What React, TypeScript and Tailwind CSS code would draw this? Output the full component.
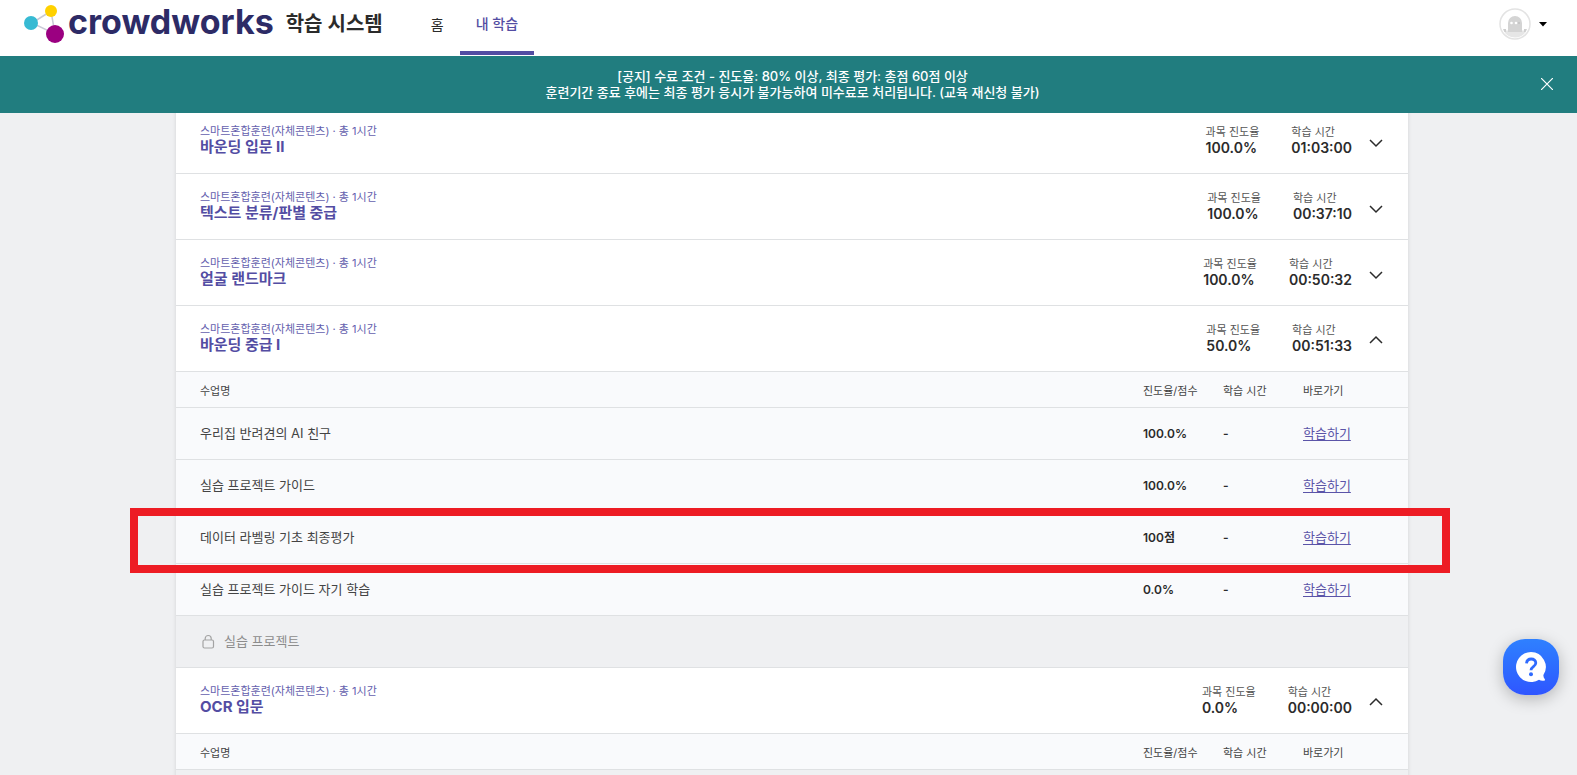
import { useState } from "react";

interface Lesson {
    name: string;
    score?: string;
    locked?: boolean;
    marked?: boolean;
}

interface Course {
    id: number;
    title: string;
    progress: string;
    time: string;
    lessons: Lesson[];
}

const courses: Course[] = [
    { id: 1, title: "바운딩 입문 II", progress: "100.0%", time: "01:03:00", lessons: [] },
    { id: 2, title: "텍스트 분류/판별 중급", progress: "100.0%", time: "00:37:10", lessons: [] },
    { id: 3, title: "얼굴 랜드마크", progress: "100.0%", time: "00:50:32", lessons: [] },
    {
        id: 4,
        title: "바운딩 중급 I",
        progress: "50.0%",
        time: "00:51:33",
        lessons: [
            { name: "우리집 반려견의 AI 친구", score: "100.0%" },
            { name: "실습 프로젝트 가이드", score: "100.0%" },
            { name: "데이터 라벨링 기초 최종평가", score: "100점", marked: true },
            { name: "실습 프로젝트 가이드 자기 학습", score: "0.0%" },
            { name: "실습 프로젝트", locked: true },
        ],
    },
    {
        id: 5,
        title: "OCR 입문",
        progress: "0.0%",
        time: "00:00:00",
        lessons: [{ name: "", locked: true }],
    },
];

const LogoMark = () => (
    <svg width="40" height="40" viewBox="0 0 40 40" aria-hidden="true">
        <path d="M8 19 27 7l4 23z" fill="none" stroke="#c9c9d6" strokeWidth="1.5" />
        <circle cx="7" cy="19" r="7" fill="#37bad3" />
        <circle cx="27" cy="7" r="6" fill="#ffd100" />
        <circle cx="31" cy="30" r="9" fill="#9b0081" />
    </svg>
);

const Ghost = () => (
    <svg width="32" height="32" viewBox="0 0 32 32" aria-hidden="true">
        <circle cx="16" cy="16" r="15" fill="#fff" stroke="#e3e3e3" strokeWidth="1.5" />
        <path d="M4.500 22.500h23a13 13 0 0 1-23 0z" fill="#e6e6e6" />
        <path d="M4 21h3v3H5.500zM25 21h3l-1.500 3H25z" fill="#cfcfcf" />
        <path d="M9 24v-9a7 7 0 0 1 14 0v9z" fill="#d4d4d4" />
        <circle cx="12.500" cy="15" r="1.300" fill="#fff" />
        <circle cx="17" cy="15" r="1.300" fill="#fff" />
        <circle cx="20" cy="15" r="1" fill="#c2c2c2" />
    </svg>
);

const Chevron = ({ open }: { open: boolean }) => (
    <svg width="24" height="24" viewBox="0 0 24 24" fill="none" stroke="#2b2b2b" strokeWidth="1.5" aria-hidden="true">
        <path d={open ? "M6 16l6-6 6 6" : "M6 11l6 6 6-6"} />
    </svg>
);

const Lock = () => (
    <svg width="16" height="16" viewBox="0 0 16 16" fill="none" stroke="#a3a3a3" strokeWidth="1.200" aria-hidden="true">
        <rect x="3" y="6" width="10.500" height="8" rx="1.500" />
        <path d="M5.200 6V4.500a3 3 0 0 1 6 0V6" />
    </svg>
);

const LessonTable = ({ lessons }: { lessons: Lesson[] }) => (
    <table className="w-full table-fixed border-separate border-spacing-0 bg-[#f9fafc] text-left text-[13px] text-[#444]">
        <colgroup>
            <col />
            <col className="w-20" />
            <col className="w-20" />
            <col className="w-[105px]" />
        </colgroup>
        <thead>
            <tr className="text-[11px] [&>th]:h-9 [&>th]:border-b [&>th]:border-[#dfe1e3] [&>th]:p-0 [&>th]:pt-1 [&>th]:font-normal">
                <th>
                    <span className="pl-6">수업명</span>
                </th>
                <th>진도율/점수</th>
                <th>학습 시간</th>
                <th>바로가기</th>
            </tr>
        </thead>
        <tbody>
            {lessons.map((lesson, i) =>
                lesson.locked ? (
                    <tr key={i}>
                        <td colSpan={4} className="h-[52px] border-b border-[#dfe1e3] bg-[#eff0f2] pl-6 text-[#8c8c8c]">
                            {lesson.name && (
                                <span className="flex items-center gap-2">
                                    <Lock />
                                    {lesson.name}
                                </span>
                            )}
                        </td>
                    </tr>
                ) : (
                    <tr key={i} className="relative [&>td]:h-[52px] [&>td]:border-b [&>td]:border-[#dfe1e3] [&>td]:p-0">
                        <td>
                            <span className="pl-6">{lesson.name}</span>
                            {lesson.marked && (
                                <span className="pointer-events-none absolute -top-1 -right-[42px] -bottom-[9px] -left-[46px] z-10 border-8 border-[#ed1c24]" />
                            )}
                        </td>
                        <td className="text-[12px] font-semibold text-[#2b2b2b]">{lesson.score}</td>
                        <td className="text-[12px] font-semibold text-[#2b2b2b]">-</td>
                        <td>
                            <a href="#" className="text-[#5b54a8] underline underline-offset-2">
                                학습하기
                            </a>
                        </td>
                    </tr>
                )
            )}
        </tbody>
    </table>
);

const App = () => {
    const [openIds, setOpenIds] = useState<number[]>([4, 5]);
    const [showNotice, setShowNotice] = useState(true);

    const toggle = (id: number) => {
        setOpenIds(openIds.includes(id) ? openIds.filter((o) => o !== id) : [...openIds, id]);
    };

    return (
        <div className="flex h-screen flex-col overflow-hidden bg-[#eff0f2] font-['Inter','Noto_Sans_CJK_KR',sans-serif] text-[#2b2b2b]">
            <header className="z-20 flex h-14 shrink-0 items-center justify-between bg-white pr-[30px] pl-6">
                <div className="flex h-full items-center">
                    <a href="#" className="flex items-center pb-2">
                        <LogoMark />
                        <span className="ml-1 pb-1 font-[Inter,sans-serif] text-[34px] leading-10 font-bold text-[#2d2b66]">crowdworks</span>
                        <span className="ml-3 text-[20px] leading-6 font-semibold">학습 시스템</span>
                    </a>
                    <nav className="ml-8 flex h-full text-[14px] font-medium">
                        <a href="#" className="flex items-center px-4 pb-2 font-normal">
                            홈
                        </a>
                        <a href="#" className="mb-px flex items-center border-b-4 border-[#534da3] px-4 pb-1 text-[#534da3]">
                            내 학습
                        </a>
                    </nav>
                </div>
                <button className="mb-2 flex items-center gap-2" aria-label="내 계정">
                    <Ghost />
                    <svg width="8" height="5" viewBox="0 0 8 5" aria-hidden="true">
                        <path d="M0 0h8L4 4.500z" fill="#000" />
                    </svg>
                </button>
            </header>

            {showNotice && (
                <div className="z-20 flex h-[57px] shrink-0 items-center bg-[#217d7f] pr-6 pb-0.5 pl-11 text-white">
                    <p className="flex-1 text-center text-[13px] leading-4 font-medium">
                        [공지] 수료 조건 - 진도율: 80% 이상, 최종 평가: 총점 60점 이상
                        <br />
                        훈련기간 종료 후에는 최종 평가 응시가 불가능하여 미수료로 처리됩니다. (교육 재신청 불가)
                    </p>
                    <button onClick={() => setShowNotice(false)} aria-label="닫기">
                        <svg width="12" height="12" viewBox="0 0 12 12" stroke="#fff" strokeWidth="1.200" aria-hidden="true">
                            <path d="M0 0l12 12M12 0L0 12" />
                        </svg>
                    </button>
                </div>
            )}

            <main className="-mt-[5px] pl-[7px]">
                <div className="mx-auto max-w-[1232px] bg-white shadow-[0_0_4px_rgba(0,0,0,0.12)]">
                    {courses.map((course) => {
                        const open = openIds.includes(course.id);
                        return (
                            <section key={course.id}>
                                <button
                                    onClick={() => toggle(course.id)}
                                    aria-expanded={open}
                                    className="flex h-[66px] w-full items-center border-b border-[#dfe1e3] pr-5 pl-6 text-left"
                                >
                                    <span className="flex-1 pb-[3px] text-[#534da3]">
                                        <span className="block text-[11px] leading-4 text-[#655fae]">스마트혼합훈련(자체콘텐츠) · 총 1시간</span>
                                        <span className="block text-[15px] leading-4 font-bold">{course.title}</span>
                                    </span>
                                    <span className="mr-8 pb-0.5">
                                        <span className="block text-[11px] leading-4 text-[#555]">과목 진도율</span>
                                        <span className="block text-[14px] leading-4 font-semibold">{course.progress}</span>
                                    </span>
                                    <span className="mr-3 pb-0.5">
                                        <span className="block text-[11px] leading-4 text-[#555]">학습 시간</span>
                                        <span className="block text-[14px] leading-4 font-semibold">{course.time}</span>
                                    </span>
                                    <Chevron open={open} />
                                </button>
                                {open && course.lessons.length > 0 && <LessonTable lessons={course.lessons} />}
                            </section>
                        );
                    })}
                </div>
            </main>

            <button
                aria-label="문의하기"
                className="fixed right-[18px] bottom-20 z-30 flex size-14 items-center justify-center rounded-[22px] bg-linear-to-b from-[#2f80ff] to-[#2f55ff] shadow-[0_4px_16px_rgba(0,0,0,0.25)]"
            >
                <svg width="32" height="32" viewBox="0 0 32 32" aria-hidden="true">
                    <path d="M16 1a15 15 0 1 0 8 27.700c1.500 1 3.500 1.300 5.500.8.700-.2.600-.9.200-1.400-.9-1.200-1.400-2.600-1.300-4A15 15 0 0 0 16 1z" fill="#fff" />
                    <path d="M11.500 12.300c.3-2.800 2.100-4.300 4.700-4.300 2.700 0 4.600 1.600 4.600 4 0 3.600-4.800 3.500-4.800 7.200" fill="none" stroke="#2f6bff" strokeWidth="2.800" />
                    <circle cx="16" cy="23.300" r="2" fill="#2f6bff" />
                </svg>
            </button>
        </div>
    );
};

export default App;
